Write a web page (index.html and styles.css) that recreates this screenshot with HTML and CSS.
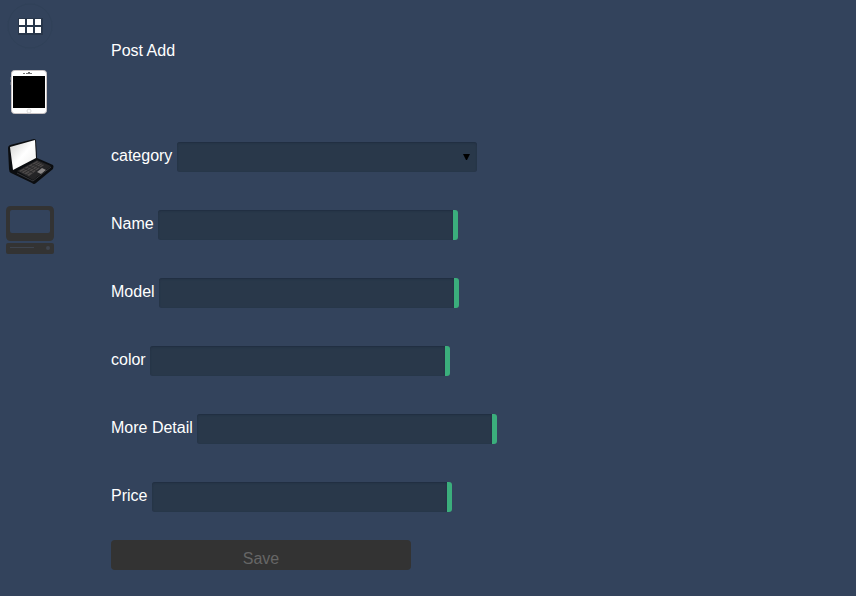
FILE: index.html
```html
<!DOCTYPE html>
<html lang="en">
<head>
<meta charset="utf-8">
<title>Post Add</title>
<link rel="stylesheet" href="styles.css">
</head>
<body>
<div class="page">
  <nav class="sidebar" aria-label="Categories">
    <a class="item item-menu" href="#all" aria-label="All">
      <svg width="50" height="49" viewBox="0 0 50 49">
        <circle cx="25" cy="26" r="22" fill="none" stroke="#304158"/>
        <path fill="#28364a" d="M13 18h25v17H13z"/>
        <path fill="#fff" d="M14 19h6v6h-6zM22 19h6v6h-6zM30 19h6v6h-6zM14 27h6v6h-6zM22 27h6v6h-6zM30 27h6v6h-6z"/>
      </svg>
    </a>
    <a class="item" href="#tablets" aria-label="Tablets">
      <svg width="50" height="50" viewBox="0 0 50 50">
        <rect x="6.500" y="2.500" width="35" height="43" rx="3" fill="#fff" stroke="#c9c3c4"/>
        <path fill="#000" d="M8 8h32v32H8z"/>
        <path fill="none" stroke="#777" d="M18 5.500h2M21 5.500h6"/>
        <path fill="#666" d="M23 4h2v1h-2z"/>
        <circle cx="24" cy="43" r="2" fill="#fff" stroke="#ddd"/>
        <path stroke="#5d6573" d="M5.500 9v3M5.500 14v3"/>
      </svg>
    </a>
    <a class="item" href="#laptops" aria-label="Laptops">
      <svg width="50" height="50" viewBox="0 0 50 50">
        <defs>
          <linearGradient id="screen" x1="0" y1="0" x2="1" y2="1">
            <stop offset="0" stop-color="#cfcfcd"/>
            <stop offset=".5" stop-color="#fff"/>
            <stop offset="1" stop-color="#ececea"/>
          </linearGradient>
        </defs>
        <path fill="#0b0d10" d="M3 11Q3 9 5 8L29 2Q31 2 31 4L32 21L48 28Q49 29 48 32L31 46Q29 48 27 46L6 36Q4 35 4 32Z"/>
        <path fill="url(#screen)" d="M5 10L30 3L31 21L8 33Z"/>
        <path fill="#242426" d="M12 34L32 23L46 29L28 43Z"/>
        <path fill="#4b4848" d="M14 34L32 24L39 28L24 39Z"/>
        <path fill="none" stroke="#2c2b2c" d="M16 35L34 25M19 36L36 26M21 38L38 27M19 31L28 36M23 29L32 34M27 27L36 31"/>
        <path fill="#8a8787" d="M32 35L37 31L41 33L36 37Z"/>
        <path fill="none" stroke="#363638" d="M12 36L28 44L46 30"/>
      </svg>
    </a>
    <a class="item" href="#desktops" aria-label="Desktops">
      <svg width="50" height="50" viewBox="0 0 50 50">
        <path fill="#333" fill-rule="evenodd" d="M6 0h38q5 0 5 5v25q0 5-5 5H6q-5 0-5-5V5q0-5 5-5zM7 4q-2 0-2 2v19q0 2 2 2h36q2 0 2-2V6q0-2-2-2z"/>
        <rect x="1" y="37" width="48" height="11" rx="2" fill="#333"/>
        <path stroke="#3e444e" stroke-width="1" d="M5 41.500h24"/>
        <circle cx="43" cy="42" r="2" fill="#3e444e"/>
      </svg>
    </a>
  </nav>
  <main class="content">
    <h1 class="title">Post Add</h1>
    <form class="form">
      <div class="row">
        <label for="category">category</label>
        <div class="picker">
          <select id="category" class="field"><option></option></select>
          <svg class="arrow" width="7" height="6" viewBox="0 0 7 6"><path d="M0 0h7L4 6H3z"/></svg>
        </div>
      </div>
      <div class="row"><label for="name">Name</label> <input id="name" class="field required" type="text"></div>
      <div class="row"><label for="model">Model</label> <input id="model" class="field required" type="text"></div>
      <div class="row"><label for="color">color</label> <input id="color" class="field required" type="text"></div>
      <div class="row"><label for="detail">More Detail</label> <input id="detail" class="field required" type="text"></div>
      <div class="row"><label for="price">Price</label> <input id="price" class="field required" type="text"></div>
      <button class="save" type="button" disabled>Save</button>
    </form>
  </main>
</div>
</body>
</html>
```
FILE: styles.css
```css
* { box-sizing: border-box; }

body {
  margin: 0;
  background: #33435c;
  color: #fff;
  font: 16px/20px "Liberation Sans", Arial, sans-serif;
}

.page { display: flex; min-height: 100vh; }

.sidebar {
  display: flex;
  flex-direction: column;
  gap: 19px;
  width: 60px;
  padding-left: 5px;
}

.item { display: block; height: 50px; }
.item-menu { height: 49px; }
.item svg { display: block; }

.content { flex: 1; padding: 41px 16px 24px 51px; }

.title { margin: 0; font-size: 16px; font-weight: 400; }

.form {
  display: flex;
  flex-direction: column;
  gap: 38px;
  padding-top: 81px;
}

.row label {
  display: inline-block;
  padding-top: 4px;
  vertical-align: top;
}

.picker {
  display: inline-block;
  position: relative;
  vertical-align: top;
}

.field {
  display: inline-block;
  appearance: none;
  width: 300px;
  height: 30px;
  margin: 0;
  padding: 0 12px;
  border: 0;
  border-radius: 3px;
  outline: 0;
  background: #29384a;
  box-shadow: inset 0 1px 2px #202e40;
  color: #fff;
  font: inherit;
  vertical-align: top;
}

.required { border-right: 5px solid #3bae7c; }

.arrow {
  position: absolute;
  top: 12px;
  right: 7px;
  fill: #000;
  pointer-events: none;
}

.save {
  width: 300px;
  height: 30px;
  margin-top: -10px;
  padding: 8px 0 0;
  border: 0;
  border-radius: 4px;
  background: #333;
  color: #666;
  font: inherit;
}
```
